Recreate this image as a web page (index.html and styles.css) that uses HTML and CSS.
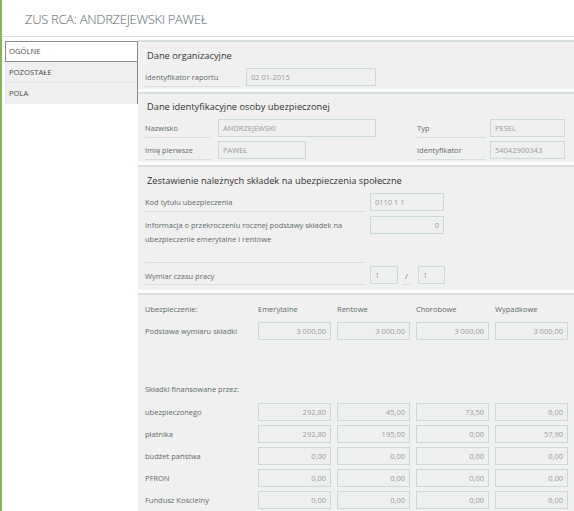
FILE: index.html
```html
<!doctype html>
<html>
<head>
  <meta charset="utf-8">
  <link rel="stylesheet" href="styles.css">
</head>
<body>
  <div class="page">
    <div class="header">ZUS RCA: ANDRZEJEWSKI PAWEŁ</div>

    <div class="main">
      <div class="tabs">
        <div class="tab selected">OGÓLNE</div>
        <div class="tab">POZOSTAŁE</div>
        <div class="tab">POLA</div>
      </div>

      <div class="content">
        <div class="section s1">
          <div class="title">Dane organizacyjne</div>
          <div class="row">
            <div class="label w-raport">Identyfikator raportu</div>
            <div class="field w-130">02 01-2015</div>
          </div>
        </div>

        <div class="section s2">
          <div class="title">Dane identyfikacyjne osoby ubezpieczonej</div>
          <div class="row">
            <div class="label w-name">Nazwisko</div>
            <div class="field w-158">ANDRZEJEWSKI</div>
            <div class="label w-typ gap-l">Typ</div>
            <div class="field w-75">PESEL</div>
          </div>
          <div class="row">
            <div class="label w-name">Imię pierwsze</div>
            <div class="field w-88">PAWEŁ</div>
            <div class="label w-typ gap-l2">Identyfikator</div>
            <div class="field w-75">54042900343</div>
          </div>
        </div>

        <div class="section s3">
          <div class="title">Zestawienie należnych składek na ubezpieczenia społeczne</div>
          <div class="row">
            <div class="label w-long">Kod tytułu ubezpieczenia</div>
            <div class="field w-74">0110 1 1</div>
          </div>
          <div class="row tall">
            <div class="label w-long twoline">Informacja o przekroczeniu rocznej podstawy składek na<br>ubezpieczenie emerytalne i rentowe</div>
            <div class="field w-74 num">0</div>
          </div>
          <div class="row">
            <div class="label w-long low">Wymiar czasu pracy</div>
            <div class="field w-28">1</div>
            <div class="label slash low">/</div>
            <div class="field w-27">1</div>
          </div>
        </div>

        <div class="section s4">
          <div class="grid">
            <div class="glabel">Ubezpieczenie:</div>
            <div class="glabel">Emerytalne</div>
            <div class="glabel">Rentowe</div>
            <div class="glabel">Chorobowe</div>
            <div class="glabel">Wypadkowe</div>

            <div class="glabel">Podstawa wymiaru składki</div>
            <div class="field num">3 000,00</div>
            <div class="field num">3 000,00</div>
            <div class="field num">3 000,00</div>
            <div class="field num">3 000,00</div>
          </div>

          <div class="subhead">Składki finansowane przez:</div>

          <div class="grid">
            <div class="glabel">ubezpieczonego</div>
            <div class="field num">292,80</div>
            <div class="field num">45,00</div>
            <div class="field num">73,50</div>
            <div class="field num">0,00</div>

            <div class="glabel">płatnika</div>
            <div class="field num">292,80</div>
            <div class="field num">195,00</div>
            <div class="field num">0,00</div>
            <div class="field num">57,90</div>

            <div class="glabel">budżet państwa</div>
            <div class="field num">0,00</div>
            <div class="field num">0,00</div>
            <div class="field num">0,00</div>
            <div class="field num">0,00</div>

            <div class="glabel">PFRON</div>
            <div class="field num">0,00</div>
            <div class="field num">0,00</div>
            <div class="field num">0,00</div>
            <div class="field num">0,00</div>

            <div class="glabel">Fundusz Kościelny</div>
            <div class="field num">0,00</div>
            <div class="field num">0,00</div>
            <div class="field num">0,00</div>
            <div class="field num">0,00</div>
          </div>
        </div>
      </div>
    </div>
  </div>
</body>
</html>
```

FILE: styles.css
```css
body{
  margin: 0;
  background: #ffffff;
  font-family: "Open Sans", "Noto Sans", sans-serif;
  overflow: hidden;
}
.page{
  border-left: 2px solid #8db255;
  min-height: 511px;
}
.header{
  height: 36px;
  line-height: 38px;
  padding-left: 23px;
  font-size: 13px;
  font-weight: 300;
  letter-spacing: -0.3px;
  color: #5a666e;
  border-bottom: 1px solid #d3dcdc;
}
.main{
  display: flex;
  align-items: flex-start;
  margin-top: 3px;
}

/* tabs on the left */
.tabs{
  width: 132px;
  margin-left: 3px;
  border-right: 1px solid #8c8c8c;
  margin-top: 1px;
}
.tab{
  height: 21px;
  line-height: 21px;
  padding-left: 4px;
  font-size: 7.7px;
  color: #4a4a4a;
  background: #efefef;
  border-bottom: 1px solid #e2e2e2;
  box-sizing: border-box;
}
.tab.selected{
  background: #ffffff;
  border: 1px solid #8c8c8c;
  border-right: none;
  line-height: 19px;
  padding-left: 3px;
}
.tab:last-child{
  border-bottom: none;
}

/* right panel */
.content{
  flex: 1;
}
.section{
  background: #f0f0f0;
  border-top: 2px solid #d5dddd;
  margin-bottom: 3px;
  padding: 0 6px 0 7px;
}
.s1{ padding-top: 6px; padding-bottom: 2px; }
.s2{ padding-top: 5px; padding-bottom: 2px; }
.s3{ padding-top: 6px; padding-bottom: 5px; }
.s4{ padding-top: 5px; padding-bottom: 10px; }

.title{
  height: 17px;
  line-height: 16px;
  padding-left: 2px;
  font-size: 9.3px;
  color: #333333;
}
.row{
  display: flex;
  align-items: flex-end;
  height: 22px;
}
.row.tall{
  height: 51px;
  align-items: flex-start;
}
.label{
  font-size: 7.5px;
  color: #5d6b6b;
  height: 18px;
  line-height: 17px;
  border-bottom: 1px solid #d3dede;
  margin-right: 6px;
  box-sizing: border-box;
}
.label.low{
  height: 22px;
  padding-top: 5px;
  line-height: 16px;
}
.twoline{
  height: 51px;
  line-height: 13.5px;
  padding-top: 7px;
}
.row.tall .field{
  margin-top: 4px;
}
.field{
  box-sizing: border-box;
  height: 18px;
  line-height: 16px;
  padding: 0 4px;
  font-size: 7.5px;
  color: #9a9a9a;
  background: #eef0f0;
  border: 1px solid #c9d9d9;
  white-space: nowrap;
}
.row .field{
  margin-bottom: 1px;
}
.field.num{
  text-align: right;
}

.w-raport{ width: 95px; }
.w-name{ width: 66px; margin-right: 7px; }
.w-typ{ width: 69px; margin-right: 4px; }
.gap-l{ margin-left: 41px; }
.gap-l2{ margin-left: 111px; }
.w-long{ width: 219px; margin-right: 6px; }
.w-130{ width: 130px; }
.w-158{ width: 158px; }
.w-88{ width: 88px; }
.w-75{ width: 75px; }
.w-74{ width: 74px; }
.w-28{ width: 28px; }
.w-27{ width: 27px; }
.slash{
  width: 9px;
  margin: 0 7px 0 4px;
  text-align: center;
}

/* contributions table */
.grid{
  display: grid;
  grid-template-columns: 107px repeat(4, 73px);
  column-gap: 6px;
  row-gap: 4px;
  align-items: center;
}
.glabel{
  font-size: 7.5px;
  color: #5d6b6b;
  height: 18px;
  line-height: 18px;
  white-space: nowrap;
}
.subhead{
  font-size: 7.5px;
  color: #5d6b6b;
  height: 18px;
  line-height: 18px;
  margin-top: 40px;
  margin-bottom: 5px;
}
```
